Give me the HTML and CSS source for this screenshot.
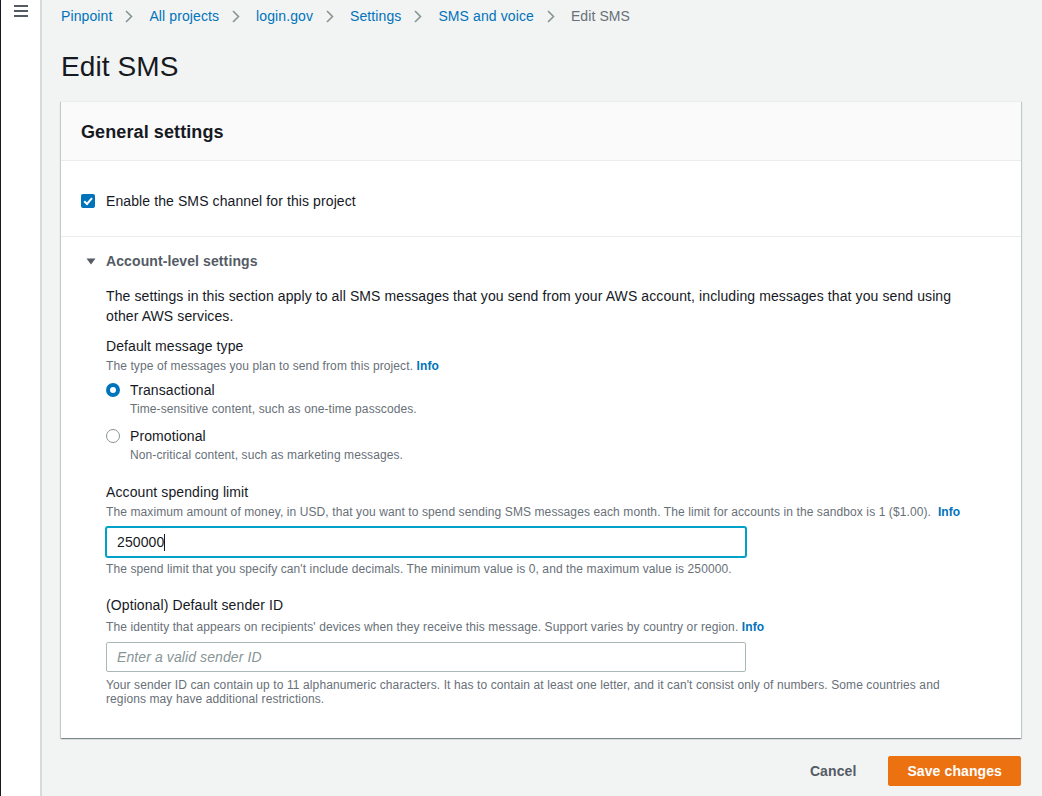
FILE: index.html
```html
<!DOCTYPE html>
<html lang="en">
<head>
<meta charset="utf-8">
<title>Edit SMS</title>
<link rel="stylesheet" href="styles.css">
</head>
<body>
<div class="app">
  <aside class="sidebar">
    <div class="hamburger"><span></span><span></span><span></span></div>
  </aside>
  <main class="main">
    <nav class="crumbs">
      <a class="crumb">Pinpoint</a>
      <svg class="chev" width="8" height="13" viewBox="0 0 8 13"><polyline points="1,1 6.5,6.5 1,12" fill="none" stroke="#879596" stroke-width="1.6"/></svg>
      <a class="crumb">All projects</a>
      <svg class="chev" width="8" height="13" viewBox="0 0 8 13"><polyline points="1,1 6.5,6.5 1,12" fill="none" stroke="#879596" stroke-width="1.6"/></svg>
      <a class="crumb">login.gov</a>
      <svg class="chev" width="8" height="13" viewBox="0 0 8 13"><polyline points="1,1 6.5,6.5 1,12" fill="none" stroke="#879596" stroke-width="1.6"/></svg>
      <a class="crumb">Settings</a>
      <svg class="chev" width="8" height="13" viewBox="0 0 8 13"><polyline points="1,1 6.5,6.5 1,12" fill="none" stroke="#879596" stroke-width="1.6"/></svg>
      <a class="crumb">SMS and voice</a>
      <svg class="chev" width="8" height="13" viewBox="0 0 8 13"><polyline points="1,1 6.5,6.5 1,12" fill="none" stroke="#879596" stroke-width="1.6"/></svg>
      <span class="crumb-current">Edit SMS</span>
    </nav>

    <h1 class="title">Edit SMS</h1>

    <section class="card">
      <header class="card-head">General settings</header>

      <div class="enable-row">
        <svg class="checkbox" width="14" height="14" viewBox="0 0 14 14"><rect x="0" y="0" width="14" height="14" rx="2" fill="#0073bb"/><polyline points="3.2,7.2 6,10 11,4.2" fill="none" stroke="#fff" stroke-width="2"/></svg>
        <span>Enable the SMS channel for this project</span>
      </div>

      <div class="expand">
        <div class="expand-head">
          <svg class="caret" width="10" height="7" viewBox="0 0 10 7"><polygon points="0.5,0.5 9.5,0.5 5,6.5" fill="#545b64"/></svg>
          <span>Account-level settings</span>
        </div>

        <div class="expand-body">
          <p class="intro">The settings in this section apply to all SMS messages that you send from your AWS account, including messages that you send using other AWS services.</p>

          <div class="field">
            <div class="label">Default message type</div>
            <div class="desc">The type of messages you plan to send from this project. <a class="info">Info</a></div>
            <div class="radio-group">
              <div class="radio">
                <span class="dot dot-on"></span>
                <div>
                  <div class="radio-label">Transactional</div>
                  <div class="radio-desc">Time-sensitive content, such as one-time passcodes.</div>
                </div>
              </div>
              <div class="radio">
                <span class="dot"></span>
                <div>
                  <div class="radio-label">Promotional</div>
                  <div class="radio-desc">Non-critical content, such as marketing messages.</div>
                </div>
              </div>
            </div>
          </div>

          <div class="field field-spend">
            <div class="label">Account spending limit</div>
            <div class="desc">The maximum amount of money, in USD, that you want to spend sending SMS messages each month. The limit for accounts in the sandbox is 1 ($1.00). &nbsp;<a class="info">Info</a></div>
            <div class="input input-focus"><span>250000</span><span class="text-caret"></span></div>
            <div class="hint">The spend limit that you specify can't include decimals. The minimum value is 0, and the maximum value is 250000.</div>
          </div>

          <div class="field field-sender">
            <div class="label">(Optional) Default sender ID</div>
            <div class="desc desc-sender">The identity that appears on recipients' devices when they receive this message. Support varies by country or region. <a class="info">Info</a></div>
            <input class="input" type="text" placeholder="Enter a valid sender ID">
            <div class="hint hint-sender">Your sender ID can contain up to 11 alphanumeric characters. It has to contain at least one letter, and it can't consist only of numbers. Some countries and regions may have additional restrictions.</div>
          </div>
        </div>
      </div>
    </section>

    <div class="actions">
      <button class="btn-link">Cancel</button>
      <button class="btn-primary">Save changes</button>
    </div>
  </main>
</div>
</body>
</html>
```

FILE: styles.css
```css
* { box-sizing: border-box; }

html, body {
  margin: 0;
  padding: 0;
  height: 100%;
}

body {
  background: #f2f3f3;
  font-family: "Liberation Sans", Arial, sans-serif;
  font-size: 14px;
  line-height: 20px;
  letter-spacing: 0.1px;
  color: #16191f;
}

.app {
  display: flex;
  min-height: 100vh;
}

.sidebar {
  width: 42px;
  flex: none;
  background: #fff;
  border-left: 1px solid #16191f;
  border-right: 2px solid #d5dbdb;
  padding: 5px 0 0 13px;
}

.hamburger {
  display: flex;
  flex-direction: column;
  gap: 3px;
  width: 14px;
}
.hamburger span {
  display: block;
  height: 2px;
  background: #545b64;
}

.main {
  flex: 1;
  padding: 0 21px 0 19px;
}

.crumbs {
  display: flex;
  align-items: center;
  padding: 6px 0;
  line-height: 20px;
}
.crumb {
  color: #0073bb;
  text-decoration: none;
}
.chev {
  margin: 0 16px 0 13px;
  flex: none;
}
.crumb-current {
  color: #687078;
}

.title {
  margin: 17px 0 16px;
  font-size: 28px;
  line-height: 36px;
  font-weight: 400;
  color: #16191f;
}

.card {
  background: #fff;
  border-top: 1px solid #eaeded;
  box-shadow: 0 1px 1px 0 rgba(0, 28, 36, 0.3), 1px 1px 1px 0 rgba(0, 28, 36, 0.15), -1px 1px 1px 0 rgba(0, 28, 36, 0.15);
}

.card-head {
  background: #fafafa;
  border-bottom: 1px solid #eaeded;
  padding: 19px 20px 17px;
  font-size: 18px;
  line-height: 22px;
  font-weight: 700;
  color: #16191f;
}

.enable-row {
  display: flex;
  align-items: center;
  gap: 11px;
  padding: 30px 20px 25px;
  border-bottom: 1px solid #eaeded;
}
.checkbox { flex: none; }

.expand {
  padding: 14px 55px 32px 25px;
}
.expand-head {
  display: flex;
  align-items: center;
  gap: 10px;
  font-weight: 700;
  color: #545b64;
}
.caret { flex: none; }

.expand-body {
  padding-left: 20px;
}

.intro {
  margin: 15px 0 0;
  color: #16191f;
}

.field { margin-top: 10px; }
.field-spend { margin-top: 19px; }
.field-sender { margin-top: 18px; }

.label {
  color: #16191f;
}
.desc {
  margin-top: 2px;
  font-size: 12px;
  line-height: 16px;
  color: #687078;
}
.desc-sender { margin-top: 4px; }
.info {
  color: #0073bb;
  font-weight: 700;
  text-decoration: none;
}

.radio-group {
  margin-top: 6px;
  display: flex;
  flex-direction: column;
  gap: 9px;
}
.radio {
  display: flex;
  gap: 10px;
}
.dot {
  flex: none;
  width: 14px;
  height: 14px;
  margin-top: 3px;
  border-radius: 50%;
  border: 1px solid #879596;
  background: #fff;
}
.dot-on {
  border: 4px solid #0073bb;
}
.radio-label { color: #16191f; }
.radio-desc {
  margin-top: 1px;
  font-size: 12px;
  line-height: 16px;
  color: #687078;
}

.input {
  display: flex;
  align-items: center;
  width: 640px;
  height: 30px;
  margin-top: 7px;
  padding: 0 10px;
  border: 1px solid #aab7b8;
  border-radius: 2px;
  background: #fff;
  font-family: "Liberation Sans", Arial, sans-serif;
  font-size: 14px;
  letter-spacing: 0.1px;
  color: #16191f;
  outline: none;
}
.input::placeholder {
  color: #879596;
  font-style: italic;
}
.input-focus {
  border-color: #00a1c9;
  box-shadow: 0 0 0 1px #00a1c9;
}
.text-caret {
  display: inline-block;
  width: 1px;
  height: 17px;
  background: #16191f;
}

.hint {
  margin-top: 5px;
  font-size: 12px;
  line-height: 15px;
  color: #687078;
}
.hint-sender {
  margin-top: 6px;
  line-height: 14px;
}

.actions {
  display: flex;
  justify-content: flex-end;
  align-items: center;
  gap: 12px;
  margin-top: 18px;
}
.btn-link, .btn-primary {
  font-family: "Liberation Sans", Arial, sans-serif;
  font-size: 14px;
  font-weight: 700;
  line-height: 20px;
  letter-spacing: 0.1px;
  border-radius: 2px;
  cursor: pointer;
}
.btn-link {
  background: none;
  border: none;
  color: #545b64;
  padding: 4px 20px;
}
.btn-primary {
  background: #ec7211;
  border: 1px solid #ec7211;
  color: #fff;
  padding: 4px 18px;
}
```
